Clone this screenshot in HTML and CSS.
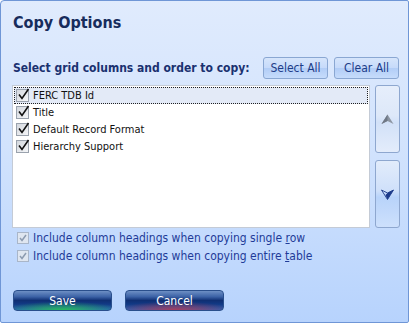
FILE: index.html
```html
<!DOCTYPE html>
<html>
<head>
<meta charset="utf-8">
<link rel="stylesheet" href="styles.css">
</head>
<body>
<div class="window">
  <h1 class="title">Copy Options</h1>
  <div class="label-row">
    <span class="label">Select grid columns and order to copy:</span>
    <button class="small-btn">Select All</button>
    <button class="small-btn">Clear All</button>
  </div>
  <div class="list-area">
    <div class="list">
      <div class="item selected"><span class="cb"><svg width="13" height="13" viewBox="0 0 13 13"><path d="M2 6.5 L5 10.5 L11.5 1" fill="none" stroke="#111" stroke-width="1.6"/></svg></span><span>FERC TDB Id</span></div>
      <div class="item"><span class="cb"><svg width="13" height="13" viewBox="0 0 13 13"><path d="M2 6.5 L5 10.5 L11.5 1" fill="none" stroke="#111" stroke-width="1.6"/></svg></span><span>Title</span></div>
      <div class="item"><span class="cb"><svg width="13" height="13" viewBox="0 0 13 13"><path d="M2 6.5 L5 10.5 L11.5 1" fill="none" stroke="#111" stroke-width="1.6"/></svg></span><span>Default Record Format</span></div>
      <div class="item"><span class="cb"><svg width="13" height="13" viewBox="0 0 13 13"><path d="M2 6.5 L5 10.5 L11.5 1" fill="none" stroke="#111" stroke-width="1.6"/></svg></span><span>Hierarchy Support</span></div>
    </div>
    <div class="movers">
      <button class="mover up"><svg width="13" height="11" viewBox="0 0 13 11"><path d="M6.5 0.5 L12.5 10 L6.5 7 L0.5 10 Z" fill="#8d96a3"/><path d="M6.5 0.5 L0.5 10 L6.5 7 Z" fill="#6f7886"/></svg></button>
      <button class="mover down"><svg width="13" height="11" viewBox="0 0 13 11"><path d="M0.5 1 L6.5 10.5 L12.5 1 L6.5 4 Z" fill="none" stroke="#1c3a8a" stroke-width="0.9"/><path d="M6.5 4 L12.5 1 L6.5 10.5 L4.5 6 Z" fill="#1c3a8a"/></svg></button>
    </div>
  </div>
  <div class="opts">
    <div class="opt"><span class="cb2"><svg width="10" height="10" viewBox="0 0 10 10"><path d="M2 5 L4 7.5 L8 2" fill="none" stroke="#8c9bb0" stroke-width="1.5"/></svg></span><span>Include column headings when copying single <u>r</u>ow</span></div>
    <div class="opt"><span class="cb2"><svg width="10" height="10" viewBox="0 0 10 10"><path d="M2 5 L4 7.5 L8 2" fill="none" stroke="#8c9bb0" stroke-width="1.5"/></svg></span><span>Include column headings when copying entire <u>t</u>able</span></div>
  </div>
  <div class="actions">
    <button class="big-btn save">Save</button>
    <button class="big-btn cancel">Cancel</button>
  </div>
</div>
</body>
</html>
```
FILE: styles.css
```css
html, body {
  margin: 0;
  padding: 0;
  width: 409px;
  height: 323px;
  overflow: hidden;
  background: #ffffff;
}
.window {
  box-sizing: border-box;
  width: 409px;
  height: 323px;
  border: 1px solid #6f96d6;
  border-radius: 4px 2px 2px 2px;
  background: linear-gradient(to bottom, #e0ebfd 0%, #d2e3fd 45%, #b7d3fd 100%);
  font-family: "DejaVu Sans Condensed", "DejaVu Sans", sans-serif;
  padding: 0 9px 0 11px;
  display: flex;
  flex-direction: column;
}
.title {
  margin: 12px 0 0 1px;
  font-family: "DejaVu Sans Condensed", "DejaVu Sans", sans-serif;
  font-size: 16px;
  font-weight: bold;
  color: #172c5c;
  line-height: 20px;
  height: 20px;
}
.label-row {
  margin-top: 24px;
  display: flex;
  align-items: center;
  height: 22px;
}
.label {
  flex: 1;
  font-size: 12px;
  font-weight: bold;
  color: #1a3170;
  margin-left: 1px;
}
.small-btn {
  box-sizing: border-box;
  height: 22px;
  width: 65px;
  margin-left: 6px;
  padding: 0;
  border: 1px solid #8aa7d2;
  border-radius: 3px;
  background: linear-gradient(to bottom, #d6e5fb 0%, #c6dafa 50%, #b2cdf6 51%, #c6dcfb 100%);
  font-family: "DejaVu Sans Condensed", "DejaVu Sans", sans-serif;
  font-size: 12px;
  color: #1d3d88;
}
.small-btn:first-of-type { margin-left: 0; }
.list-area {
  margin-top: 6px;
  display: flex;
  gap: 5px;
  height: 143px;
  flex: 0 0 143px;
}
.list {
  box-sizing: border-box;
  flex: 0 0 358px;
  height: 143px;
  border: 1px solid #c4cbd6;
  background: #ffffff;
  padding: 1px 1px;
}
.item {
  box-sizing: border-box;
  height: 17px;
  display: flex;
  align-items: center;
  font-size: 11px;
  color: #111;
  padding-left: 1px;
  border: 1px solid transparent;
}
.item.selected {
  background: #e3eaf7;
  border: 1px dotted #222;
}
.cb {
  box-sizing: border-box;
  width: 13px;
  height: 13px;
  border: 1px solid #9aa2ad;
  background: linear-gradient(135deg, #d4d8de, #f5f6f8);
  margin-right: 4px;
  display: flex;
}
.cb svg { position: relative; top: -2px; left: 0; overflow: visible; }
.movers {
  display: flex;
  flex-direction: column;
  justify-content: space-between;
  width: 25px;
}
.mover {
  box-sizing: border-box;
  width: 25px;
  height: 68px;
  padding: 0;
  border: 1px solid #8ea7cf;
  border-radius: 3px;
  display: flex;
  align-items: center;
  justify-content: center;
}
.mover.up {
  background: linear-gradient(to bottom, #e6eefb 0%, #dde8f9 45%, #d2e1f8 55%, #e3ecfb 100%);
}
.mover.down {
  background: linear-gradient(to bottom, #e2ecfb 0%, #cfe0fa 45%, #b8d3fa 55%, #cde0fc 100%);
}
.opts {
  margin-top: 4px;
  display: flex;
  flex-direction: column;
  gap: 6px;
  padding-left: 5px;
}
.opt {
  display: flex;
  align-items: center;
  height: 12px;
  font-size: 12px;
  color: #1f3b98;
}
.cb2 {
  box-sizing: border-box;
  width: 12px;
  height: 12px;
  border: 1px solid #a9b6c9;
  background: #dfe6f0;
  margin-right: 4px;
  display: flex;
  align-items: center;
  justify-content: center;
}
.actions {
  margin-top: 28px;
  display: flex;
  gap: 13px;
  padding-left: 1px;
}
.big-btn {
  box-sizing: border-box;
  width: 99px;
  height: 21px;
  padding: 0;
  border: 1px solid #2a4f8c;
  border-radius: 4px;
  color: #ffffff;
  font-family: "DejaVu Sans Condensed", "DejaVu Sans", sans-serif;
  font-size: 12px;
}
.save {
  background:
    radial-gradient(ellipse 60% 45% at 50% 100%, rgba(40,190,90,0.95), rgba(40,190,90,0) 100%),
    linear-gradient(to bottom, #6d8fc4 0%, #3c62a6 30%, #0f2f73 50%, #123a86 70%, #2a63b6 100%);
}
.cancel {
  background:
    radial-gradient(ellipse 60% 45% at 50% 100%, rgba(170,60,90,0.95), rgba(170,60,90,0) 100%),
    linear-gradient(to bottom, #6d8fc4 0%, #3c62a6 30%, #0f2f73 50%, #123a86 70%, #2a63b6 100%);
}
```
